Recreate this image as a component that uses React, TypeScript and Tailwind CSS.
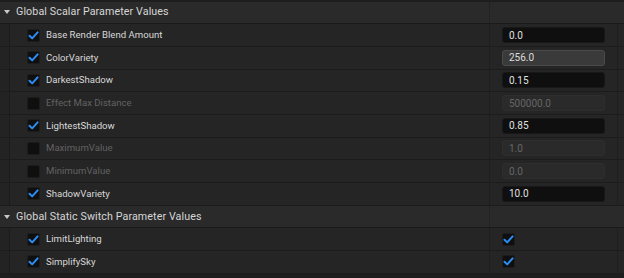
import React from 'react';

type Param = { name: string; value?: string; enabled: boolean; kind: 'num' | 'bool'; hover?: boolean };

const scalars: Param[] = [
  { name: 'Base Render Blend Amount', value: '0.0', enabled: true, kind: 'num' },
  { name: 'ColorVariety', value: '256.0', enabled: true, kind: 'num', hover: true },
  { name: 'DarkestShadow', value: '0.15', enabled: true, kind: 'num' },
  { name: 'Effect Max Distance', value: '500000.0', enabled: false, kind: 'num' },
  { name: 'LightestShadow', value: '0.85', enabled: true, kind: 'num' },
  { name: 'MaximumValue', value: '1.0', enabled: false, kind: 'num' },
  { name: 'MinimumValue', value: '0.0', enabled: false, kind: 'num' },
  { name: 'ShadowVariety', value: '10.0', enabled: true, kind: 'num' },
];

const switches: Param[] = [
  { name: 'LimitLighting', enabled: true, kind: 'bool' },
  { name: 'SimplifySky', enabled: true, kind: 'bool' },
];

function Check({ on }: { on: boolean }) {
  return (
    <div className="w-[13px] h-[13px] rounded-[2px] bg-[#0f0f0f] border border-[#1c1c1c] flex items-center justify-center shrink-0">
      {on && (
        <svg width="11" height="11" viewBox="0 0 11 11">
          <path d="M1.5 5.8 L4.2 8.4 L9.6 2.4" fill="none" stroke="#2b8ef5" strokeWidth="2" strokeLinecap="round" strokeLinejoin="round" />
        </svg>
      )}
    </div>
  );
}

function Header({ title }: { title: string }) {
  return (
    <div className="flex h-[22.7px] border-b border-[#1a1a1a] bg-[#2a2a2a]">
      <div className="flex items-center w-[490px] border-r border-[#222]">
        <svg width="16" height="10" viewBox="0 0 16 10" className="shrink-0">
          <path d="M4 3 L10 3 L7 7 Z" fill="#c8c8c8" />
        </svg>
        <span className="text-[10.7px] text-[#d6d6d6] tracking-[0.1px]">{title}</span>
      </div>
      <div className="flex-1" />
    </div>
  );
}

function Row({ p }: { p: Param }) {
  return (
    <div className="flex h-[22.7px] border-b border-[#1c1c1c] bg-[#252525]">
      <div className="w-[10px] border-r border-[#1c1c1c] bg-[#232323]" />
      <div className="w-[480px] flex items-center pl-[17px] gap-[6px] border-r border-[#1f1f1f]">
        <Check on={p.enabled} />
        <span className={`text-[9.6px] ${p.enabled ? 'text-[#d8d8d8]' : 'text-[#626262]'}`}>{p.name}</span>
      </div>
      <div className="flex-1 flex items-center pl-[12px] pr-[6px]">
        <div className="flex-1 flex items-center h-full border-r border-[#1f1f1f]">
          {p.kind === 'num' ? (
            <div
              className={`w-[103px] h-[16px] rounded-[3px] flex items-center px-[6px] text-[10px] border ${
                p.hover
                  ? 'bg-[#3a3a3a] border-[#4a4a4a] text-[#dcdcdc]'
                  : p.enabled
                  ? 'bg-[#0f0f0f] border-[#181818] text-[#e0e0e0]'
                  : 'bg-[#2a2a2a] border-[#2e2e2e] text-[#666]'
              }`}
            >
              {p.value}
            </div>
          ) : (
            <Check on={p.enabled} />
          )}
        </div>
      </div>
    </div>
  );
}

export default function App() {
  return (
    <div className="w-[624px] h-[278px] bg-[#1e1e1e] overflow-hidden pt-[1.5px]" style={{ fontFamily: 'Roboto, "Liberation Sans", sans-serif' }}>
      <Header title="Global Scalar Parameter Values" />
      {scalars.map((p) => (
        <Row key={p.name} p={p} />
      ))}
      <Header title="Global Static Switch Parameter Values" />
      {switches.map((p) => (
        <Row key={p.name} p={p} />
      ))}
    </div>
  );
}
